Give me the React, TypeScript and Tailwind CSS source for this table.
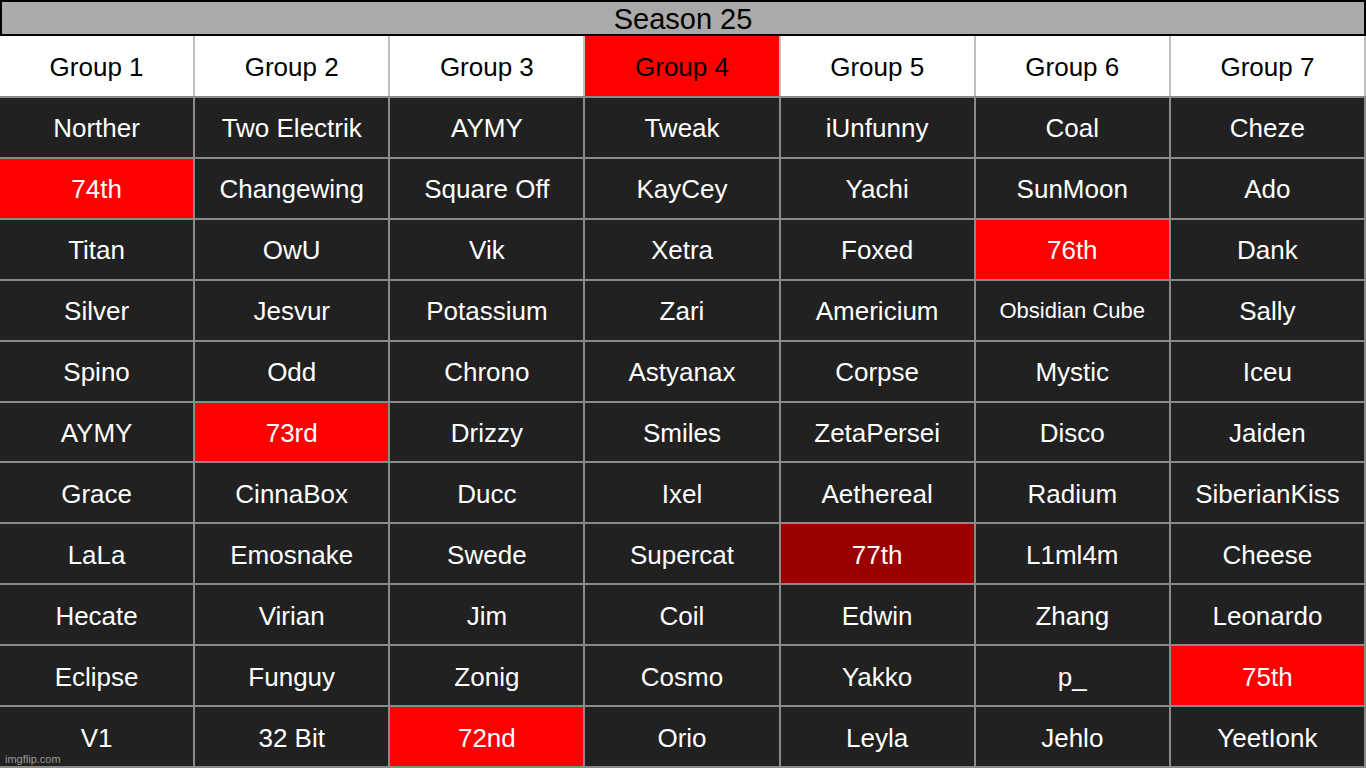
const groups = ["Group 1", "Group 2", "Group 3", "Group 4", "Group 5", "Group 6", "Group 7"];

type Cell = { name: string; tone?: "red" | "dark" | "small" };

const rows: Cell[][] = [
  [{ name: "Norther" }, { name: "Two Electrik" }, { name: "AYMY" }, { name: "Tweak" }, { name: "iUnfunny" }, { name: "Coal" }, { name: "Cheze" }],
  [{ name: "74th", tone: "red" }, { name: "Changewing" }, { name: "Square Off" }, { name: "KayCey" }, { name: "Yachi" }, { name: "SunMoon" }, { name: "Ado" }],
  [{ name: "Titan" }, { name: "OwU" }, { name: "Vik" }, { name: "Xetra" }, { name: "Foxed" }, { name: "76th", tone: "red" }, { name: "Dank" }],
  [{ name: "Silver" }, { name: "Jesvur" }, { name: "Potassium" }, { name: "Zari" }, { name: "Americium" }, { name: "Obsidian Cube", tone: "small" }, { name: "Sally" }],
  [{ name: "Spino" }, { name: "Odd" }, { name: "Chrono" }, { name: "Astyanax" }, { name: "Corpse" }, { name: "Mystic" }, { name: "Iceu" }],
  [{ name: "AYMY" }, { name: "73rd", tone: "red" }, { name: "Drizzy" }, { name: "Smiles" }, { name: "ZetaPersei" }, { name: "Disco" }, { name: "Jaiden" }],
  [{ name: "Grace" }, { name: "CinnaBox" }, { name: "Ducc" }, { name: "Ixel" }, { name: "Aethereal" }, { name: "Radium" }, { name: "SiberianKiss" }],
  [{ name: "LaLa" }, { name: "Emosnake" }, { name: "Swede" }, { name: "Supercat" }, { name: "77th", tone: "dark" }, { name: "L1ml4m" }, { name: "Cheese" }],
  [{ name: "Hecate" }, { name: "Virian" }, { name: "Jim" }, { name: "Coil" }, { name: "Edwin" }, { name: "Zhang" }, { name: "Leonardo" }],
  [{ name: "Eclipse" }, { name: "Funguy" }, { name: "Zonig" }, { name: "Cosmo" }, { name: "Yakko" }, { name: "p_" }, { name: "75th", tone: "red" }],
  [{ name: "V1" }, { name: "32 Bit" }, { name: "72nd", tone: "red" }, { name: "Orio" }, { name: "Leyla" }, { name: "Jehlo" }, { name: "YeetIonk" }],
];

function NameCell({ cell }: { cell: Cell }) {
  const bg =
    cell.tone === "red" ? "bg-[#ff0000]" : cell.tone === "dark" ? "bg-[#990000]" : "bg-[#212121]";
  const size = cell.tone === "small" ? "text-[22px]" : "text-[26px]";
  return (
    <div className={`${bg} ${size} flex items-center justify-center pt-[2px] text-white leading-none`}>
      {cell.name}
    </div>
  );
}

export default function App() {
  return (
    <div
      className="relative w-[1366px] h-[768px] overflow-hidden bg-white"
      style={{ fontFamily: '"Liberation Sans", Arial, sans-serif' }}
    >
      <div className="h-[36px] w-[1366px] border-2 border-black bg-[#aaaaaa] flex items-center justify-center pt-[2px] text-[29px] leading-none text-black">
        Season 25
      </div>
      <div className="grid grid-cols-7 gap-x-[2px] bg-[#c0c0c0] pr-[2px] h-[60px]">
        {groups.map((g) => (
          <div
            key={g}
            className={`flex items-center justify-center pt-[2px] text-[26px] leading-none text-black ${
              g === "Group 4" ? "bg-[#ff0000]" : "bg-white"
            }`}
          >
            {g}
          </div>
        ))}
      </div>
      <div className="grid grid-cols-7 grid-rows-11 gap-[2px] bg-[#8a8a8a] pt-[2px] pr-[2px] pb-[2px] h-[672px]">
        {rows.flatMap((r, ri) => r.map((c, ci) => <NameCell key={`${ri}-${ci}`} cell={c} />))}
      </div>
      <div className="absolute left-[5px] bottom-[3px] text-[11px] leading-none text-[#9a9a9a]">imgflip.com</div>
    </div>
  );
}
